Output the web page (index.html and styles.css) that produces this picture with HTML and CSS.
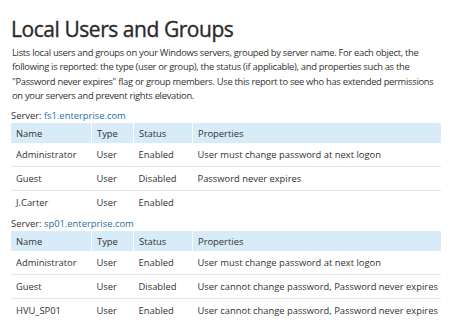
FILE: index.html
```html
<!DOCTYPE html>
<html lang="en">
<head>
    <meta charset="UTF-8">
    <title>Local Users and Groups</title>
    <link rel="stylesheet" href="styles.css">
</head>
<body>
    <div class="report">
        <h1>Local Users and Groups</h1>
        <p class="intro">Lists local users and groups on your Windows servers, grouped by server name. For each object, the following is reported: the type (user or group), the status (if applicable), and properties such as the "Password never expires" flag or group members. Use this report to see who has extended permissions on your servers and prevent rights elevation.</p>

        <div class="server">Server: <span class="host">fs1.enterprise.com</span></div>
        <table class="grid">
            <tr><th class="c-name">Name</th><th class="c-type">Type</th><th class="c-status">Status</th><th>Properties</th></tr>
            <tr><td>Administrator</td><td>User</td><td>Enabled</td><td>User must change password at next logon</td></tr>
            <tr><td>Guest</td><td>User</td><td>Disabled</td><td>Password never expires</td></tr>
            <tr><td>J.Carter</td><td>User</td><td>Enabled</td><td></td></tr>
        </table>

        <div class="server">Server: <span class="host">sp01.enterprise.com</span></div>
        <table class="grid">
            <tr><th class="c-name">Name</th><th class="c-type">Type</th><th class="c-status">Status</th><th>Properties</th></tr>
            <tr><td>Administrator</td><td>User</td><td>Enabled</td><td>User must change password at next logon</td></tr>
            <tr><td>Guest</td><td>User</td><td>Disabled</td><td>User cannot change password, Password never expires</td></tr>
            <tr><td>HVU_SP01</td><td>User</td><td>Enabled</td><td>User cannot change password, Password never expires</td></tr>
        </table>
    </div>
</body>
</html>
```

FILE: styles.css
```css
body {
    margin: 0;
    background: #ffffff;
    color: #333333;
    font-family: "Open Sans", "Noto Sans", sans-serif;
}

.report {
    padding: 0 9px 0 11px;
}

h1 {
    font-size: 21px;
    font-weight: 400;
    letter-spacing: -0.45px;
    -webkit-text-stroke: 0.35px #2b2b2b;
    color: #2b2b2b;
    margin: 0;
    padding-top: 15px;
    line-height: 28px;
}

.intro {
    font-size: 9.4px;
    letter-spacing: -0.3px;
    line-height: 14.3px;
    margin: 3px 0 7px 1px;
}

.server {
    font-size: 9.4px;
    line-height: 11px;
    margin-bottom: 2px;
}

.host {
    color: #1f6ea6;
}

.grid {
    width: 100%;
    table-layout: fixed;
    border-collapse: collapse;
    font-size: 9.4px;
    margin-bottom: 4px;
}

.grid th {
    background: #d7ebf8;
    font-weight: 400;
    text-align: left;
    height: 20px;
    padding: 0 5px;
    border-left: 1px solid #ffffff;
}

.grid th:first-child {
    border-left: none;
}

.grid td {
    height: 23px;
    padding: 0 5px;
    border-bottom: 1px solid #e6e6e6;
    white-space: nowrap;
}

.grid tr:last-child td {
    border-bottom: none;
}

.c-name { width: 70px; }
.c-type { width: 31px; }
.c-status { width: 48px; }
```
